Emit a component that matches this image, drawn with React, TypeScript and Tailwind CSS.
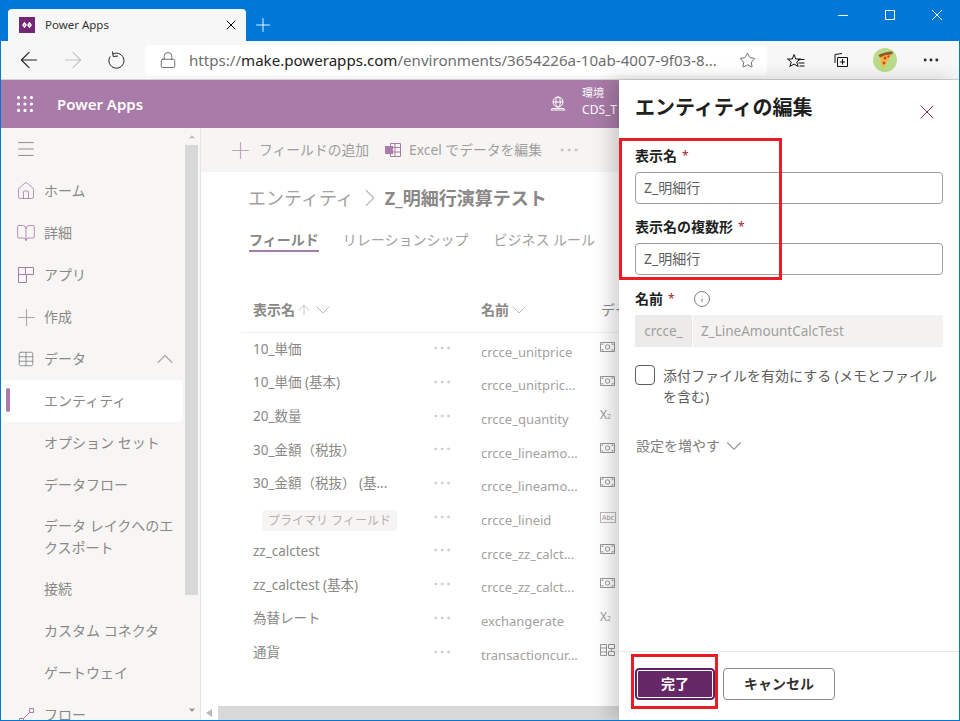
import { ArrowLeft, ArrowRight, Lock, X, Plus, Star, MoreHorizontal, Home, BookOpen, Menu, ChevronUp, ChevronDown, ChevronRight, Grip, Info, Table, ArrowUp } from "lucide-react";

const navTop = [
  { label: "ホーム", icon: <Home size={20} strokeWidth={1} className="-ml-[2px] text-[#a97ba8]" /> },
  { label: "詳細", icon: <BookOpen size={20} strokeWidth={1} className="-ml-[2px] text-[#a97ba8]" /> },
  { label: "アプリ", icon: <AppsIcon /> },
  { label: "作成", icon: <Plus size={27} strokeWidth={1} className="-ml-[5px] text-[#aaa]" /> },
];

const navSub = ["オプション セット", "データフロー"];
const navSub2 = ["接続", "カスタム コネクタ", "ゲートウェイ"];

const rows = [
  { name: "10_単価", logical: "crcce_unitprice", type: "money" },
  { name: "10_単価 (基本)", logical: "crcce_unitpric...", type: "money" },
  { name: "20_数量", logical: "crcce_quantity", type: "x" },
  { name: "30_金額（税抜）", logical: "crcce_lineamo...", type: "money" },
  { name: "30_金額（税抜） (基...", logical: "crcce_lineamo...", type: "money" },
  { name: "", logical: "crcce_lineid", type: "abc" },
  { name: "zz_calctest", logical: "crcce_zz_calct...", type: "money" },
  { name: "zz_calctest (基本)", logical: "crcce_zz_calct...", type: "money" },
  { name: "為替レート", logical: "exchangerate", type: "x" },
  { name: "通貨", logical: "transactioncur...", type: "grid" },
];

function AppsIcon() {
  return (
    <svg width="16" height="16" viewBox="0 0 16 16" fill="none" stroke="#a97ba8">
      <path d="M.5.500h15v7h-7v8h-8zM.5 7.500h8M7.500.5v7" />
    </svg>
  );
}

function TypeIcon({ type }: { type: string }) {
  if (type === "x") {
    return (
      <span className="text-[12px] leading-none text-[#9a9a9a]">
        X<span className="text-[7px]">2</span>
      </span>
    );
  }
  if (type === "abc") {
    return <span className="border border-[#bbb] px-px text-[7px] leading-[10px] text-[#9a9a9a]">Abc</span>;
  }
  if (type === "grid") {
    return (
      <svg width="15" height="14" viewBox="0 0 15 14" fill="none" stroke="#999">
        <path d="M.5 1.500h6v11h-6zM.5 5h6M.5 9h6M8.500 1.500h6v4h-6zM8.500 8.500h6v4h-6zM11.500 5.500v3" />
      </svg>
    );
  }
  return (
    <svg width="15" height="12" viewBox="0 0 15 12" fill="none" stroke="#999">
      <path d="M.5 1.500h14v9H.5z" />
      <circle cx="7.500" cy="6" r="2.200" />
      <path d="M2 4V3h1.500M13 4V3h-1.500M2 8v1h1.500M13 8v1h-1.500" />
    </svg>
  );
}

function PizzaAvatar() {
  return (
    <span className="flex h-6 w-6 items-center justify-center rounded-full bg-[#b9dc8a]">
      <svg width="20" height="20" viewBox="0 0 20 20">
        <path d="M4 6Q10 2.500 17.500 2.500L8 19z" fill="#f5b942" />
        <path d="M3.500 5Q10 1.500 18 1.500L17 4.500Q10.500 4 5 7.500z" fill="#8f5a2a" />
        <circle cx="10" cy="8" r="1.600" fill="#d9432f" />
        <circle cx="13.500" cy="6.500" r="1.200" fill="#d9432f" />
        <circle cx="9" cy="13" r="1.400" fill="#d9432f" />
      </svg>
    </span>
  );
}

function NavRow({ label, children, active }: { label: string; children?: React.ReactNode; active?: boolean }) {
  return (
    <div className={`relative flex h-[42px] shrink-0 items-center pl-[17px] ${active ? "w-[182px] rounded-sm bg-white" : ""}`}>
      {active && <span className="absolute left-[5px] top-[8px] h-6 w-[4px] rounded-full bg-[#a97ba8]" />}
      <span className="flex w-[26px] shrink-0 justify-start">{children}</span>
      <span className="text-sm text-[#8a8886]">{label}</span>
    </div>
  );
}

export default function App() {
  return (
    <div className="relative flex h-[721px] w-[960px] flex-col overflow-hidden border-x border-b border-[#0078d7] bg-white font-['Noto_Sans','Noto_Sans_CJK_JP',sans-serif]">
      {/* title bar */}
      <div className="flex h-[41px] shrink-0 items-end bg-[#0078d7] pl-[7px]">
        <div className="flex h-8 w-[238px] items-center rounded-t bg-[#f7f7f7] pl-[11px] pr-[7px]">
          <span className="flex h-4 w-4 items-center justify-center bg-[#742774]">
            <svg width="10" height="6" viewBox="0 0 10 6" fill="none" stroke="white" strokeWidth="1.500">
              <path d="M2.500 1 1 3l1.500 2L4 3zM7.500 1 6 3l1.500 2L9 3z" />
            </svg>
          </span>
          <span className="ml-[10px] flex-1 text-[11.500px] text-[#333]">Power Apps</span>
          <X size={16} strokeWidth={1.5} className="text-black" />
        </div>
        <Plus size={22} strokeWidth={1} className="mb-[5px] ml-[6px] text-white" />
        <div className="mb-[21px] ml-auto mr-[17px] flex items-center gap-[37px]">
          <svg width="10" height="10" viewBox="0 0 10 10" stroke="white" fill="none"><path d="M0 5.500h10" /></svg>
          <svg width="10" height="10" viewBox="0 0 10 10" stroke="white" fill="none"><path d="M.5.500h9v9h-9z" /></svg>
          <svg width="10" height="10" viewBox="0 0 10 10" stroke="white" fill="none"><path d="M0 0l10 10M10 0 0 10" /></svg>
        </div>
      </div>
      {/* toolbar */}
      <div className="flex h-[39px] shrink-0 items-center border-b border-[#d2d2d2] bg-[#f7f7f7] pl-[15px]">
        <ArrowLeft size={26} strokeWidth={1} className="text-[#222]" />
        <ArrowRight size={26} strokeWidth={1} className="ml-[18px] text-[#c4c4c4]" />
        <svg width="18" height="18" viewBox="0 0 18 18" fill="none" stroke="#222" className="ml-[22px]">
          <path d="M5 3A7.500 7.500 0 1 1 2.200 5.500" />
          <path d="M4.500.5 5.200 5.500 10 5" />
        </svg>
        <div className="ml-[19px] flex h-[30px] w-[622px] items-center rounded bg-white pl-[14px] pr-[11px]">
          <Lock size={18} strokeWidth={1} className="text-[#444]" />
          <span className="ml-[12px] flex-1 truncate text-[15.100px] text-[#6e6e6e]">
            https://<span className="text-[#222]">make.powerapps.com</span>/environments/3654226a-10ab-4007-9f03-8...
          </span>
          <Star size={17} strokeWidth={1} className="ml-2 shrink-0 text-[#333]" />
        </div>
        <svg width="18" height="15" viewBox="0 0 18 15" fill="none" stroke="#111" className="ml-[20px]">
          <path d="M7 1.500 8.700 6H13.500L9.700 9l1.500 4.500L7 11l-4.200 2.500L4.300 9 .5 6h4.800z" fill="#f7f7f7" />
          <path d="M11 6.500h6.500M11.500 10h6M12.500 13h5" />
        </svg>
        <svg width="16" height="16" viewBox="0 0 16 16" fill="none" stroke="#111" className="ml-[28px]">
          <path d="M2 11V2.500l7-1M4.500 5.500h10v9h-10zM9.500 7v5.500M7 10h5" />
        </svg>
        <span className="ml-[24px]"><PizzaAvatar /></span>
        <MoreHorizontal size={20} strokeWidth={1.5} className="ml-[24px] text-[#222]" />
      </div>
      {/* app header */}
      <div className="flex h-12 shrink-0 items-center bg-[#a97ba8] pl-[13px] text-white">
        <Grip size={22} strokeWidth={1.5} />
        <span className="ml-[21px] text-[15px] font-semibold">Power Apps</span>
        <svg width="18" height="16" viewBox="0 0 18 16" fill="none" stroke="white" className="ml-[406px]">
          <circle cx="9" cy="6" r="5" />
          <ellipse cx="9" cy="6" rx="2.200" ry="5" />
          <path d="M4 6h10M3 12.500h12l1 1.500H2z" />
        </svg>
        <span className="-mt-[7px] ml-[15px] flex flex-col text-xs leading-[17px]">
          <span className="text-[11px]">環境</span>
          <span>CDS_T</span>
        </span>
      </div>
      <div className="flex min-h-0 flex-1">
        {/* sidebar */}
        <div className="relative flex w-[200px] shrink-0 border-r border-[#e4e4e4] bg-[#f7f6f5]">
          <div className="flex h-full w-[184px] flex-col overflow-hidden">
            <div className="flex h-[42px] shrink-0 items-center pl-[14px]">
              <Menu size={22} strokeWidth={0.9} className="text-[#777]" />
            </div>
            {navTop.map((n) => (
              <NavRow key={n.label} label={n.label}>{n.icon}</NavRow>
            ))}
            <div className="relative shrink-0">
              <NavRow label="データ"><Table size={18} strokeWidth={1} className="-ml-[1px] text-[#777]" /></NavRow>
              <ChevronUp size={28} strokeWidth={1} className="absolute right-[6px] top-[7px] text-[#aaa]" />
            </div>
            <NavRow label="エンティティ" active />
            {navSub.map((n) => <NavRow key={n} label={n} />)}
            <div className="h-[62px] shrink-0 pl-[43px] pr-[2px] pt-[9px] text-sm leading-[22px] text-[#8a8886]">
              データ レイクへのエクスポート
            </div>
            {navSub2.map((n) => <NavRow key={n} label={n} />)}
            <NavRow label="フロー">
              <svg width="17" height="17" viewBox="0 0 17 17" fill="none" stroke="#a97ba8">
                <path d="M1.500 11.500h4v4h-4zM11.500 1.500h4v4h-4zM5.500 11.500l6-6" />
              </svg>
            </NavRow>
          </div>
          <div className="flex h-full w-[13px] shrink-0 flex-col items-center">
            <ChevronUp size={10} className="mt-[4px] fill-[#bbb] text-[#bbb]" />
            <div className="mt-[3px] h-[450px] w-full bg-[#d8d8d8]" />
            <ChevronDown size={10} className="mb-[5px] mt-auto fill-[#888] text-[#888]" />
          </div>
        </div>
        {/* main */}
        <div className="relative flex min-w-0 flex-1 flex-col">
          <div className="flex h-11 shrink-0 items-center bg-[#f7f5f3] pl-[26px] text-[13.800px] text-[#a09e9c]">
            <Plus size={27} strokeWidth={1} className="text-[#c4a0c3]" />
            <span className="ml-[5px]">フィールドの追加</span>
            <svg width="16" height="14" viewBox="0 0 16 14" fill="none" stroke="#a97ba8" className="ml-[16px]">
              <path d="M5.500.5h10v13h-10zM5.500 4.500h10M5.500 9h10M10 .5v13" />
              <rect x="0" y="3" width="8" height="8" fill="#a97ba8" stroke="none" />
            </svg>
            <span className="ml-[8px]">Excel でデータを編集</span>
            <MoreHorizontal size={24} strokeWidth={1} className="ml-[15px] text-[#bbb]" />
          </div>
          <div className="mt-[14px] flex h-6 shrink-0 items-center pl-[47px] text-lg text-[#a3a1a0]">
            <span>エンティティ</span>
            <ChevronRight size={30} strokeWidth={1} className="ml-[1px] text-[#bbb]" />
            <span className="font-bold text-[#8a8886]">Z_明細行演算テスト</span>
          </div>
          <div className="mt-[18px] flex h-6 shrink-0 pl-[48px] text-sm leading-[24px] text-[#a3a1a0]">
            <span className="border-b-2 border-[#a97ba8] font-semibold text-[#8a8886]">フィールド</span>
            <span className="ml-[24px]">リレーションシップ</span>
            <span className="ml-[25px]">ビジネス ルール</span>
          </div>
          <div className="ml-[40px] mt-[36px] flex h-[45px] shrink-0 items-center border-b border-[#f0f0f0] pl-[12px] text-sm font-semibold text-[#8a8886]">
            <span className="flex w-[228px] items-center">
              表示名
              <ArrowUp size={16} strokeWidth={1} className="ml-[1px] text-[#aaa]" />
              <ChevronDown size={24} strokeWidth={1} className="-ml-[1px] text-[#bbb]" />
            </span>
            <span className="flex w-[120px] items-center">
              名前
              <ChevronDown size={24} strokeWidth={1} className="-ml-[2px] text-[#bbb]" />
            </span>
            <span className="font-normal">データ型</span>
          </div>
          <div className="ml-[52px] mt-[1px] flex flex-col">
            {rows.map((r) => (
              <div key={r.logical + r.name} className="flex h-[33.700px] items-center whitespace-nowrap text-[13.500px]">
                <span className={`w-[181px] text-[#8a8886] ${r.name ? "pb-[4px]" : "pt-[1px]"}`}>
                  {r.name || (
                    <span className="ml-[9px] rounded-sm bg-[#f7f5f3] px-[6px] py-[2px] text-xs text-[#b3b1b0]">
                      プライマリ フィールド
                    </span>
                  )}
                </span>
                <span className="-ml-[3px] w-[50px] pb-[5px]">
                  <MoreHorizontal size={22} strokeWidth={0.8} className="text-[#b5b5b5]" />
                </span>
                <span className="w-[119px] pt-[3px] text-[13px] text-[#a3a1a0]">{r.logical}</span>
                <span className="pb-[8px]"><TypeIcon type={r.type} /></span>
              </div>
            ))}
          </div>
          <div className="absolute bottom-0 left-[5px] right-0 flex h-[15px] items-center">
            <span className="h-0 w-0 border-y-[4px] border-r-[6px] border-y-transparent border-r-[#bbb]" />
            <div className="ml-[6px] h-[14px] flex-1 bg-[#d8d8d8]" />
          </div>
        </div>
      </div>
      {/* edit panel */}
      <div className="absolute bottom-0 right-0 top-[80px] flex w-[340px] flex-col bg-white shadow-[-8px_0_18px_rgba(0,0,0,0.18)]">
        <div className="flex-1 px-4">
          <div className="flex h-[66px] items-start justify-between pt-[12px]">
            <h2 className="text-xl font-semibold leading-[32px] text-[#201f1e]">エンティティの編集</h2>
            <X size={24} strokeWidth={1} className="mr-[4px] mt-[8px] text-[#742774]" />
          </div>
          <Label text="表示名" />
          <Field value="Z_明細行" />
          <div className="mt-[13px]"><Label text="表示名の複数形" /></div>
          <Field value="Z_明細行" />
          <div className="mt-[14px] flex items-center">
            <Label text="名前" />
            <Info size={18} strokeWidth={1} className="mb-[6px] ml-[18px] text-[#555]" />
          </div>
          <div className="flex h-8 gap-px text-[13.500px] text-[#a19f9d]">
            <span className="flex w-[57px] items-center justify-center bg-[#edebe9]">crcce_</span>
            <span className="flex flex-1 items-center bg-[#f3f2f1] pl-2">Z_LineAmountCalcTest</span>
          </div>
          <div className="mt-[18px] flex items-start gap-2">
            <span className="h-5 w-5 shrink-0 rounded-sm border border-[#605e5c]" />
            <span className="text-sm leading-[21px] text-[#605e5c]">添付ファイルを有効にする (メモとファイルを含む)</span>
          </div>
          <div className="mt-[26px] flex items-center pl-[1px] text-sm text-[#807e7c]">
            設定を増やす
            <ChevronDown size={26} strokeWidth={1} className="ml-[1px] text-[#999]" />
          </div>
        </div>
        <div className="flex h-[69px] shrink-0 items-start gap-2 border-t border-[#e8e8e8] pl-4 pt-4">
          <button className="h-8 w-20 rounded-sm border border-[#5a1f5c] bg-[#662766] text-sm font-semibold text-white outline outline-1 -outline-offset-[3px] outline-white">
            完了
          </button>
          <button className="h-8 w-28 rounded-sm border border-[#8a8886] bg-white text-sm font-semibold text-[#323130]">
            キャンセル
          </button>
        </div>
      </div>
      {/* red callouts */}
      <div className="absolute left-[618px] top-[138px] h-[142px] w-[163px] border-[3px] border-[#ed1c24]" />
      <div className="absolute left-[630px] top-[654px] h-[55px] w-[87px] border-[3px] border-[#ed1c24]" />
    </div>
  );
}

function Label({ text }: { text: string }) {
  return (
    <div className="flex h-[26px] items-center pb-[6px] text-sm font-semibold leading-[20px] text-[#201f1e]">
      {text}
      <span className="ml-[5px] text-xs font-normal text-[#a4262c]">*</span>
    </div>
  );
}

function Field({ value }: { value: string }) {
  return (
    <div className="flex h-8 items-center rounded-sm border border-[#a19f9d] pl-2 text-sm text-[#605e5c]">{value}</div>
  );
}
